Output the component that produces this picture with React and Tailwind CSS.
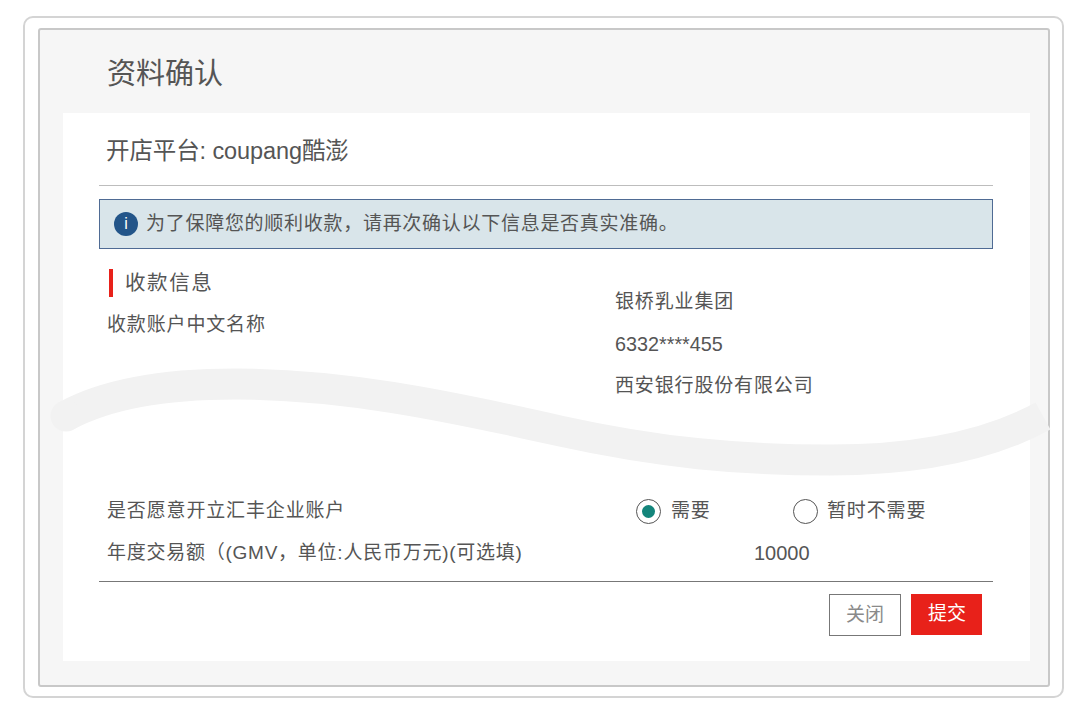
export default function App() {
  return (
    <div className="relative w-[1080px] h-[710px] overflow-hidden bg-white pt-[16px] pl-[23px] text-[#555555] font-['Liberation_Sans','Noto_Sans_CJK_SC',sans-serif]">
      <div className="w-[1041px] h-[682px] rounded-[10px] border-2 border-[#d4d4d4] pl-[13px] pt-[10px]">
        <div className="w-[1012px] h-[659px] rounded-[3px] border-2 border-[#c8c8c8] bg-[#f6f6f6]">
          <div className="h-[83px] pl-[67px] pt-[22px] text-[29px] leading-[44px] text-[#555555]">资料确认</div>
          <div className="ml-[23px] w-[967px] h-[548px] bg-white pl-[36px] pr-[37px]">
            <div className="h-[73px] border-b border-b-[#bdbdbd] pl-[7px] pt-[19px] text-[23.5px] leading-[38px] tracking-[-0.1px]">开店平台: coupang酷澎</div>
            <div className="mt-[13px] flex h-[50px] items-center border border-[#4f6b94] bg-[#d9e5ea] pl-[14px] text-[19px] tracking-[0.72px]">
              <span className="flex w-[24px] h-[24px] items-center justify-center rounded-full bg-[#235589] text-[16px] tracking-normal text-white">i</span>
              <span className="ml-[8px]">为了保障您的顺利收款，请再次确认以下信息是否真实准确。</span>
            </div>
            <div className="flex h-[247px]">
              <div className="w-[516px] pl-[8px]">
                <div className="mt-[20px] flex items-center">
                  <span className="ml-[2px] h-[28px] w-[4px] bg-[#e8211a]"></span>
                  <span className="ml-[12px] text-[20.5px] leading-[28px] tracking-[1.6px]">收款信息</span>
                </div>
                <div className="mt-[14px] text-[19px] leading-[28px] tracking-[0.85px]">收款账户中文名称</div>
              </div>
              <div className="pt-[39px] text-[19px] leading-[28px] tracking-[0.85px]">
                <div>银桥乳业集团</div>
                <div className="mt-[14px] text-[19.8px] tracking-normal">6332****455</div>
                <div className="mt-[14px]">西安银行股份有限公司</div>
              </div>
            </div>
            <div className="flex items-center h-[30px] pl-[8px] text-[19px] tracking-[0.85px]">
              <span className="w-[529px]">是否愿意开立汇丰企业账户</span>
              <span className="flex h-[25px] w-[25px] items-center justify-center rounded-full border border-[#555]">
                <span className="h-[13px] w-[13px] rounded-full bg-[#14857b]"></span>
              </span>
              <span className="ml-[10px] w-[122px]">需要</span>
              <span className="h-[25px] w-[25px] rounded-full border border-[#555]"></span>
              <span className="ml-[9px]">暂时不需要</span>
            </div>
            <div className="mt-[12px] flex items-center h-[30px] pl-[8px] text-[19px] tracking-[0.75px]">
              <span className="w-[647px]">年度交易额（(GMV，单位:人民币万元)(可选填)</span>
              <span className="text-[20px] tracking-normal">10000</span>
            </div>
            <div className="mt-[13px] flex justify-end gap-[10px] border-t border-t-[#777] pr-[11px] pt-[12px]">
              <button className="h-[42px] w-[72px] border border-[#777] bg-white text-[19px] text-[#8a8a8a]">关闭</button>
              <button className="h-[41px] w-[71px] bg-[#e8211a] pl-[1px] text-[19px] text-white">提交</button>
            </div>
          </div>
        </div>
      </div>
      <svg className="absolute left-0 top-0 pointer-events-none" width="1080" height="710" viewBox="0 0 1080 710" fill="none">
        <path d="M66 416 C110 392 170 384 235 384 C340 384 440 404 560 431 C660 453 740 460 830 460 C920 460 990 445 1043 416" stroke="#f2f2f2" strokeWidth="31" />
        <circle cx="66" cy="416" r="15.5" fill="#f2f2f2" />
      </svg>
    </div>
  );
}
